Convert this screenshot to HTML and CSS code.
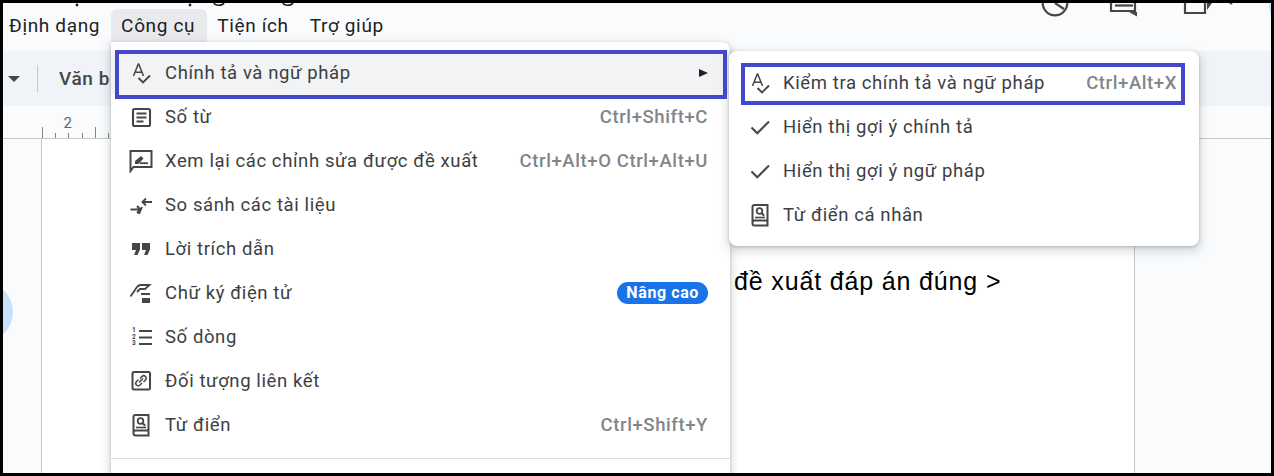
FILE: index.html
```html
<!DOCTYPE html>
<html lang="vi">
<head>
<meta charset="utf-8">
<title>Công cụ</title>
<link rel="stylesheet" href="styles.css">
</head>
<body>
<svg class="defs" width="0" height="0" aria-hidden="true">
  <symbol id="i-spell" viewBox="0 0 24 24">
    <path d="M4.500 15 9.300 3h.4l4.800 12M6 11.200h7" fill="none" stroke="currentColor" stroke-width="1.500"/>
    <path d="M9.500 17 14 21.500 21 14.500" fill="none" stroke="currentColor" stroke-width="1.900"/>
  </symbol>
  <symbol id="i-book" viewBox="0 0 24 24">
    <path d="M4.500 20V4a2 2 0 0 1 2-2h13v20.500h-13a2 2 0 0 1-2-2v-1a2 2 0 0 1 2-2h13" fill="none" stroke="currentColor" stroke-width="2"/>
    <circle cx="11.500" cy="8" r="2.800" fill="none" stroke="currentColor" stroke-width="1.800"/>
    <path d="m13.500 10 2.700 2.700" stroke="currentColor" stroke-width="2"/>
    <path d="M7 14.500h10" stroke="currentColor" stroke-width="1.600"/>
  </symbol>
  <symbol id="i-check" viewBox="0 0 24 24">
    <path d="M3.500 12.500 9.300 18.300 21 6.600" fill="none" stroke="currentColor" stroke-width="2.100"/>
  </symbol>
</svg>

<div class="frame">
  <header class="menubar">
    <span class="menu-label">Định dạng</span>
    <span class="menu-label is-open">Công cụ</span>
    <span class="menu-label">Tiện ích</span>
    <span class="menu-label">Trợ giúp</span>
  </header>

  <div class="toolbar">
    <span class="caret"></span>
    <span class="tool-sep"></span>
    <span class="style-name">Văn b</span>
  </div>

  <div class="ruler">
    <div class="ruler-marks">
      <span class="tick tick-tall"></span>
      <span class="tick"></span>
      <span class="tick tick-num"><b>2</b></span>
      <span class="tick"></span>
      <span class="tick tick-tall"></span>
      <span class="tick"></span>
    </div>
  </div>

  <main class="workspace">
    <div class="page">
      <p class="doc-text">đề xuất đáp án đúng &gt;</p>
    </div>
  </main>

  <svg class="top-strip" width="1268" height="16" viewBox="0 0 1268 16" aria-hidden="true">
    <circle cx="74" cy="2" r="1.400" fill="#202124"/>
    <circle cx="187" cy="2" r="1.400" fill="#202124"/>
    <path d="M211 0c1 3 8 3 10 0M280 0c1 3 8 3 10 0" fill="none" stroke="#202124" stroke-width="1.600"/>
    <g fill="none" stroke="#444746" stroke-width="2.200">
      <circle cx="1052" cy="0" r="12.300"/>
      <path d="M1052 0l9 6"/>
      <path d="M1108 0v8h24V0"/>
      <path d="M1112 2.500h18"/>
      <path d="M1182 0v10h20V0"/>
    </g>
    <path d="M1126 9h8v4.500zM1204 0v7l5-7z" fill="#444746"/>
    <circle cx="1228" cy="0" r="1.500" fill="#444746"/>
    <path d="M1268 0h-2.500q.5 7 2.500 12z" fill="#c2e7ff"/>
  </svg>
  <span class="side-bubble"></span>

  <nav class="menu menu-main">
    <div class="item is-hover">
      <svg class="ico"><use href="#i-spell"/></svg>
      <span class="item-text">Chính tả và ngữ pháp</span>
      <span class="arrow"></span>
    </div>
    <div class="item">
      <svg class="ico" viewBox="0 0 24 24"><rect x="4" y="4" width="17" height="17" rx="1.500" fill="none" stroke="currentColor" stroke-width="2.100"/><path d="M7.500 8.500h10M7.500 12.500h10M7.500 16.500h7" stroke="currentColor" stroke-width="1.800"/></svg>
      <span class="item-text">Số từ</span>
      <span class="kbd">Ctrl+Shift+C</span>
    </div>
    <div class="item">
      <svg class="ico" viewBox="0 0 24 24"><path d="M1.500 22V2h21v16H4.500z" fill="none" stroke="currentColor" stroke-width="2"/><path d="M11 14.200h8" stroke="currentColor" stroke-width="1.800"/><path d="M6 15v-3l6-5 2.500 2.500-5 5.500z" fill="currentColor"/></svg>
      <span class="item-text">Xem lại các chỉnh sửa được đề xuất</span>
      <span class="kbd">Ctrl+Alt+O Ctrl+Alt+U</span>
    </div>
    <div class="item">
      <svg class="ico" viewBox="0 0 24 24"><path d="M1.500 16.500h10M8 13l3.500 3.500L8 20M23 9h-9M17 5.500 13.500 9l3.500 3.500M10 21l3-7" fill="none" stroke="currentColor" stroke-width="1.900"/></svg>
      <span class="item-text">So sánh các tài liệu</span>
    </div>
    <div class="item">
      <svg class="ico" viewBox="0 0 24 24"><path d="M3 6h8v6.500L8.500 18H5l2-5H3zM13 6h8v6.500L18.500 18H15l2-5h-4z" fill="currentColor"/></svg>
      <span class="item-text">Lời trích dẫn</span>
    </div>
    <div class="item">
      <svg class="ico" viewBox="0 0 24 24"><path d="M1.500 15.500 8 6c1-1.500 2-2 4-2h8.500L16 8h-5l-3 3M12 13h9" fill="none" stroke="currentColor" stroke-width="1.800"/><path d="M13 17h8v5h-8z" fill="currentColor"/></svg>
      <span class="item-text">Chữ ký điện tử</span>
      <span class="badge">Nâng cao</span>
    </div>
    <div class="item">
      <svg class="ico" viewBox="0 0 24 24"><text class="ln" x="3" y="7">1</text><text class="ln" x="3" y="13.500">2</text><text class="ln" x="3" y="20">3</text><path d="M10 6h13M10 12.500h13M10 19h13" stroke="currentColor" stroke-width="1.900"/></svg>
      <span class="item-text">Số dòng</span>
    </div>
    <div class="item">
      <svg class="ico" viewBox="0 0 24 24"><rect x="3.500" y="3" width="17.500" height="17.500" rx="1.500" fill="none" stroke="currentColor" stroke-width="2"/><path d="M11 9.500 13 7.500a2.400 2.400 0 0 1 3.500 3.500l-2 2M13 14l-2 2a2.400 2.400 0 0 1-3.500-3.500l2-2M10 13.500l4-4" fill="none" stroke="currentColor" stroke-width="1.500"/></svg>
      <span class="item-text">Đối tượng liên kết</span>
    </div>
    <div class="item">
      <svg class="ico"><use href="#i-book"/></svg>
      <span class="item-text">Từ điển</span>
      <span class="kbd">Ctrl+Shift+Y</span>
    </div>
    <hr class="menu-sep">
  </nav>

  <nav class="menu menu-sub">
    <div class="item">
      <svg class="ico"><use href="#i-spell"/></svg>
      <span class="item-text">Kiểm tra chính tả và ngữ pháp</span>
      <span class="kbd">Ctrl+Alt+X</span>
    </div>
    <div class="item">
      <svg class="ico"><use href="#i-check"/></svg>
      <span class="item-text">Hiển thị gợi ý chính tả</span>
    </div>
    <div class="item">
      <svg class="ico"><use href="#i-check"/></svg>
      <span class="item-text">Hiển thị gợi ý ngữ pháp</span>
    </div>
    <div class="item">
      <svg class="ico"><use href="#i-book"/></svg>
      <span class="item-text">Từ điển cá nhân</span>
    </div>
  </nav>

  <span class="callout callout-main"></span>
  <span class="callout callout-sub"></span>
</div>
</body>
</html>
```
FILE: styles.css
```css
* { box-sizing: border-box; }

html, body {
  margin: 0;
  padding: 0;
  background: #000;
}

.defs { position: absolute; }

.frame {
  position: relative;
  display: flex;
  flex-direction: column;
  width: 1274px;
  height: 476px;
  border: 3px solid #000;
  overflow: hidden;
  background: #f9fbfd;
  font-family: Roboto, "Noto Sans", sans-serif;
  color: #3c4043;
}

/* menu bar */
.menubar {
  display: flex;
  align-items: flex-start;
  gap: 11px;
  height: 48px;
  padding: 6px 0 0 6px;
  flex: none;
}

.menu-label {
  font-size: 19px;
  letter-spacing: .65px;
  line-height: 33px;
  color: #202124;
  white-space: nowrap;
}

.menu-label.is-open {
  margin-right: -1px;
  padding: 0 12px 0 10px;
  height: 33px;
  border-radius: 6px 6px 0 0;
  background: #e8eaed;
}

.menu-label:last-child { margin-left: 10px; }

/* toolbar */
.toolbar {
  display: flex;
  align-items: center;
  flex: none;
  height: 55px;
  padding-left: 5px;
  overflow: hidden;
  background: #f0f4f9;
}

.caret {
  flex: none;
  width: 0;
  height: 0;
  border-left: 6px solid transparent;
  border-right: 6px solid transparent;
  border-top: 6px solid #444746;
}

.tool-sep {
  flex: none;
  width: 1px;
  height: 27px;
  margin: 0 21px 0 17px;
  background: #c7c7c7;
}

.style-name {
  font-size: 19px;
  letter-spacing: .6px;
  font-weight: 500;
  color: #444746;
  white-space: nowrap;
}

/* ruler */
.ruler {
  flex: none;
  height: 33px;
  padding-left: 39px;
  border-bottom: 1px solid #c7c7c7;
}

.ruler-marks {
  display: flex;
  align-items: flex-end;
  gap: 12.200px;
  height: 32px;
}

.tick {
  position: relative;
  width: 1px;
  height: 5px;
  background: #80868b;
}

.tick-tall { height: 11px; }

.tick-num b {
  position: absolute;
  left: -5px;
  bottom: 6px;
  font-size: 15px;
  font-weight: 400;
  color: #5f6368;
}

/* document */
.workspace {
  flex: 1;
  display: flex;
  min-height: 0;
  padding-left: 38px;
}

.page {
  width: 1094px;
  padding: 125px 0 0 692px;
  background: #fff;
  border-left: 1px solid #c7c7c7;
  border-right: 1px solid #c7c7c7;
}

.doc-text {
  margin: 0;
  font-family: "Liberation Sans", Arial, sans-serif;
  font-size: 25px;
  letter-spacing: .85px;
  line-height: 35px;
  color: #000;
  white-space: nowrap;
}

/* overlays */
.top-strip {
  position: absolute;
  left: 0;
  top: 0;
}

.side-bubble {
  position: absolute;
  left: -50px;
  top: 279px;
  width: 60px;
  height: 60px;
  border-radius: 50%;
  background: #c9dffc;
}

.menu {
  position: absolute;
  background: #fff;
  border-radius: 8px;
  box-shadow: 0 1px 3px rgba(60, 64, 67, .3), 0 4px 8px 3px rgba(60, 64, 67, .15);
}

.menu-main {
  left: 108px;
  top: 39px;
  width: 619px;
  height: 460px;
  padding-top: 9px;
  border-radius: 0 8px 8px 8px;
}

.menu-sub {
  left: 726px;
  top: 48px;
  width: 470px;
  height: 195px;
  padding-top: 10px;
}

.item {
  display: flex;
  align-items: center;
  height: 44px;
  padding: 0 22px 0 18px;
  font-size: 18.500px;
  letter-spacing: .6px;
  color: #3c4043;
  white-space: nowrap;
}

.menu-sub .item { padding-left: 19px; }

.item.is-hover {
  background: #f1f3f4;
}

.ico {
  flex: none;
  width: 24px;
  height: 24px;
  margin-right: 12px;
  color: #444746;
}

.menu-sub .ico { margin-right: 11px; }

.ln {
  font-family: Roboto, sans-serif;
  font-size: 6.500px;
  font-weight: 700;
  letter-spacing: 0;
  fill: #444746;
}

.item-text { flex: 1; }

.kbd {
  font-weight: 500;
  color: #80868b;
}

.arrow {
  width: 0;
  height: 0;
  border-left: 9px solid #202124;
  border-top: 4px solid transparent;
  border-bottom: 4px solid transparent;
}

.badge {
  padding: 0 9px;
  height: 22px;
  line-height: 22px;
  border-radius: 11px;
  background: #1a73e8;
  color: #fff;
  font-size: 16px;
  letter-spacing: .6px;
  font-weight: 700;
}

.menu-sep {
  margin: 11px 0 0;
  border: 0;
  border-top: 1px solid #dadce0;
}

.callout {
  position: absolute;
  border: 4px solid #4348c8;
}

.callout-main {
  left: 112px;
  top: 47px;
  width: 612px;
  height: 49px;
}

.callout-sub {
  left: 738px;
  top: 60px;
  width: 444px;
  height: 42px;
}
```
